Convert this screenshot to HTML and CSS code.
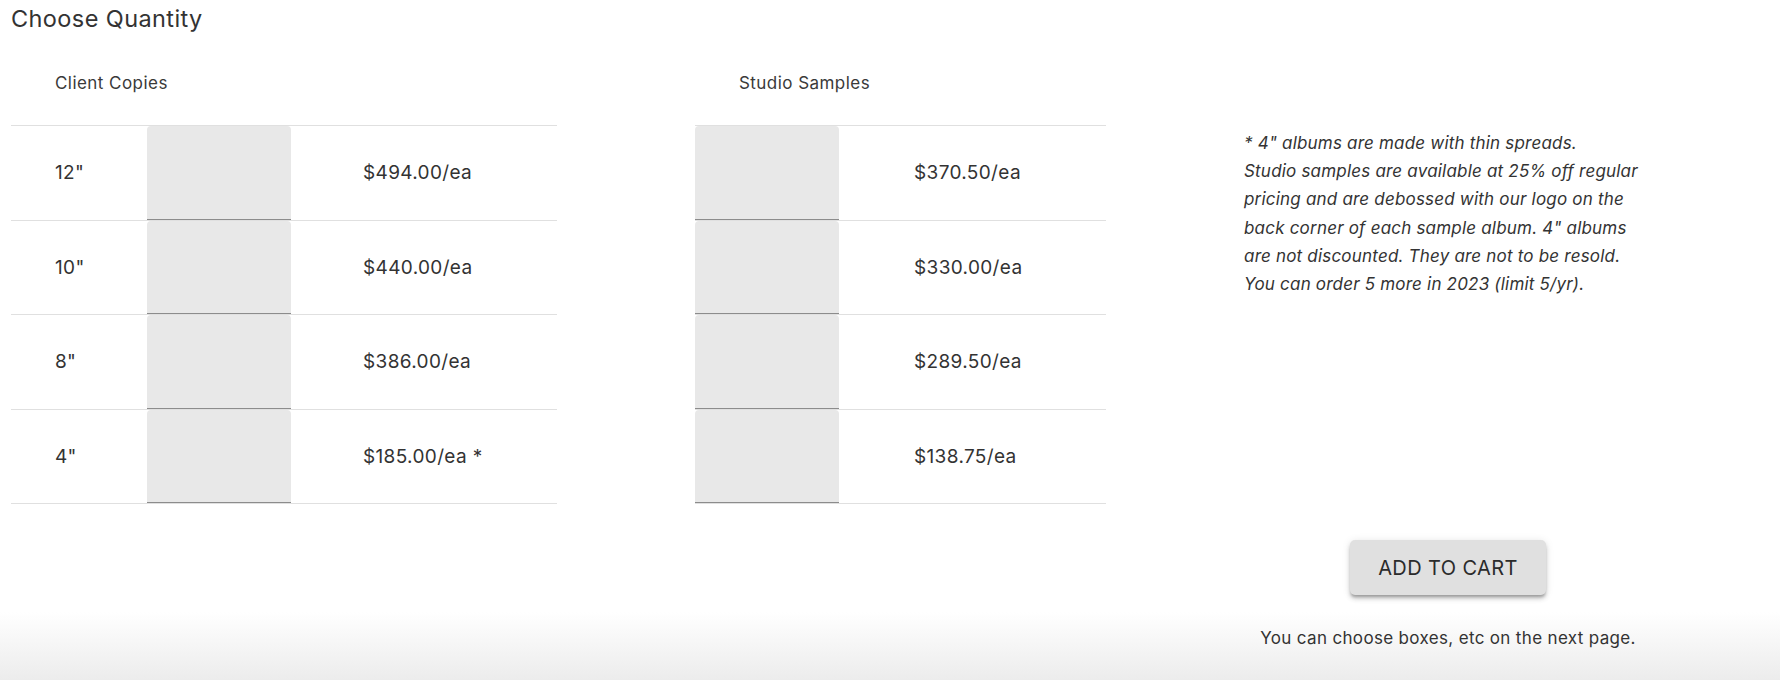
FILE: index.html
```html
<!DOCTYPE html>
<html lang="en">
<head>
<meta charset="utf-8">
<title>Choose Quantity</title>
<link rel="stylesheet" href="styles.css">
</head>
<body>
<div class="page">
  <h1 class="title">Choose Quantity</h1>
  <div class="main">
    <div class="qty qty-client">
      <div class="qty-head">Client Copies</div>
      <div class="qty-row"><div class="size">12"</div><div class="field"></div><div class="price">$494.00/ea</div></div>
      <div class="qty-row"><div class="size">10"</div><div class="field"></div><div class="price">$440.00/ea</div></div>
      <div class="qty-row"><div class="size">8"</div><div class="field"></div><div class="price">$386.00/ea</div></div>
      <div class="qty-row"><div class="size">4"</div><div class="field"></div><div class="price">$185.00/ea *</div></div>
    </div>
    <div class="qty qty-studio">
      <div class="qty-head">Studio Samples</div>
      <div class="qty-row"><div class="field"></div><div class="price">$370.50/ea</div></div>
      <div class="qty-row"><div class="field"></div><div class="price">$330.00/ea</div></div>
      <div class="qty-row"><div class="field"></div><div class="price">$289.50/ea</div></div>
      <div class="qty-row"><div class="field"></div><div class="price">$138.75/ea</div></div>
    </div>
    <div class="side">
      <p class="note">* 4" albums are made with thin spreads.<br>Studio samples are available at 25% off regular<br>pricing and are debossed with our logo on the<br>back corner of each sample album. 4" albums<br>are not discounted. They are not to be resold.<br>You can order 5 more in 2023 (limit 5/yr).</p>
      <button class="cart-btn" type="button">ADD TO CART</button>
      <p class="hint">You can choose boxes, etc on the next page.</p>
    </div>
  </div>
</div>
</body>
</html>
```

FILE: styles.css
```css
html, body {
  margin: 0;
  padding: 0;
}
body {
  min-height: 680px;
  background: linear-gradient(to bottom, #ffffff 0, #ffffff 612px, #ececec 680px);
  font-family: Inter, "Open Sans", sans-serif;
  color: #333333;
}
.page {
  padding-left: 11px;
}
.title {
  margin: 0;
  height: 40px;
  padding-top: 4px;
  box-sizing: border-box;
  font-size: 23.5px;
  letter-spacing: 0.4px;
  line-height: 30px;
  font-weight: 400;
  color: #333333;
}
.main {
  display: flex;
  align-items: flex-start;
}
.qty-client {
  width: 546px;
}
.qty-studio {
  width: 411px;
  margin-left: 138px;
}
.qty-head {
  height: 85px;
  display: flex;
  align-items: center;
  padding-left: 44px;
  font-size: 17px;
  letter-spacing: 0.45px;
  color: #3a3a3a;
}
.qty-row {
  display: flex;
  align-items: stretch;
  height: 94.5px;
  box-sizing: border-box;
  border-top: 1px solid #e0e0e0;
}
.qty-row:last-child {
  border-bottom: 1px solid #e0e0e0;
  height: 95.5px;
}
.size {
  width: 136px;
  box-sizing: border-box;
  padding-left: 44px;
  display: flex;
  align-items: center;
  font-size: 19px;
  letter-spacing: 0.35px;
}
.field {
  width: 144px;
  box-sizing: border-box;
  background: #e8e8e8;
  border-radius: 4px 4px 0 0;
  border-bottom: 1px solid #8c8c8c;
}
.price {
  display: flex;
  align-items: center;
  font-size: 19px;
  letter-spacing: 0.35px;
}
.qty-client .price {
  padding-left: 72px;
}
.qty-studio .price {
  padding-left: 75px;
}
.side {
  flex: 1;
  margin-left: 10px;
  display: flex;
  flex-direction: column;
  align-items: center;
}
.note {
  margin: 89px 0 0;
  width: 408px;
  font-size: 17px;
  letter-spacing: 0.2px;
  line-height: 28.2px;
  font-style: italic;
  white-space: nowrap;
  color: #333333;
}
.cart-btn {
  margin-top: 242px;
  width: 196px;
  height: 55px;
  border: 0;
  border-radius: 5px;
  background: #e0e0e0;
  color: #2b2b2b;
  font-family: inherit;
  font-size: 20px;
  letter-spacing: 0.4px;
  font-weight: 400;
  box-shadow: 0 3px 3px -1px rgba(0,0,0,0.25), 0 4px 5px 0 rgba(0,0,0,0.14), 0 1px 8px 0 rgba(0,0,0,0.10);
}
.hint {
  margin: 31px 0 0;
  font-size: 17px;
  letter-spacing: 0.34px;
  line-height: 24px;
  color: #333333;
}
```
